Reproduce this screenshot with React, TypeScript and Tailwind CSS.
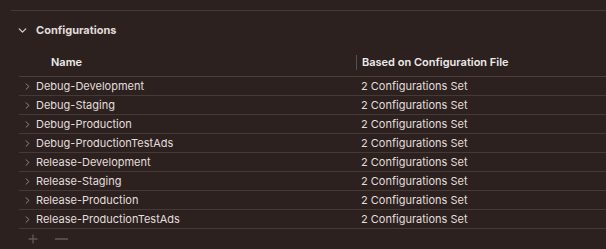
import { ChevronDown, ChevronRight } from 'lucide-react';

const rows = [
  'Debug-Development',
  'Debug-Staging',
  'Debug-Production',
  'Debug-ProductionTestAds',
  'Release-Development',
  'Release-Staging',
  'Release-Production',
  'Release-ProductionTestAds',
];

export default function App() {
  return (
    <div
      className="w-[606px] h-[249px] bg-[#2c211f] text-[#dedad9] overflow-hidden"
      style={{ fontFamily: 'Inter, "Noto Sans", sans-serif' }}
    >
      <div className="h-[10px]" />
      <div className="ml-[11px] h-px bg-[#453a38]" />
      <div className="flex items-center h-[38px] pl-[16px] pt-[1px]">
        <ChevronDown className="h-[13px] w-[13px] text-[#cfcac9]" strokeWidth={2.5} />
        <span className="ml-[7px] text-[11px] font-bold text-[#e0dcdb]">Configurations</span>
      </div>
      <div className="ml-[19px]">
        <div className="flex items-center h-[28px] border-b border-[#4a3f3d]">
          <div className="w-[337px] pl-[32px] text-[11px] font-semibold text-[#ecebea]">Name</div>
          <div className="w-px h-[15px] bg-[#5a4f4d]" />
          <div className="pl-[5px] text-[11px] font-semibold text-[#ecebea]">Based on Configuration File</div>
        </div>
        {rows.map((r) => (
          <div key={r} className="flex items-center h-[19px] border-b border-[#453a38]">
            <div className="w-[338px] flex items-center pl-[3px]">
              <ChevronRight className="h-[11px] w-[11px] text-[#9a9392]" strokeWidth={2} />
              <span className="ml-[3px] text-[11px] text-[#e2dedd]">{r}</span>
            </div>
            <div className="pl-[4px] text-[11px] text-[#e2dedd]">2 Configurations Set</div>
          </div>
        ))}
        <div className="flex items-center h-[19px] pl-[9px] gap-[17px]">
          <svg width="10" height="10" viewBox="0 0 10 10" className="text-[#5f5654]">
            <path d="M5 0.5v9M0.5 5h9" stroke="currentColor" strokeWidth="1.4" />
          </svg>
          <span className="w-[13px] h-[2px] bg-[#544b49]" />
        </div>
      </div>
    </div>
  );
}
